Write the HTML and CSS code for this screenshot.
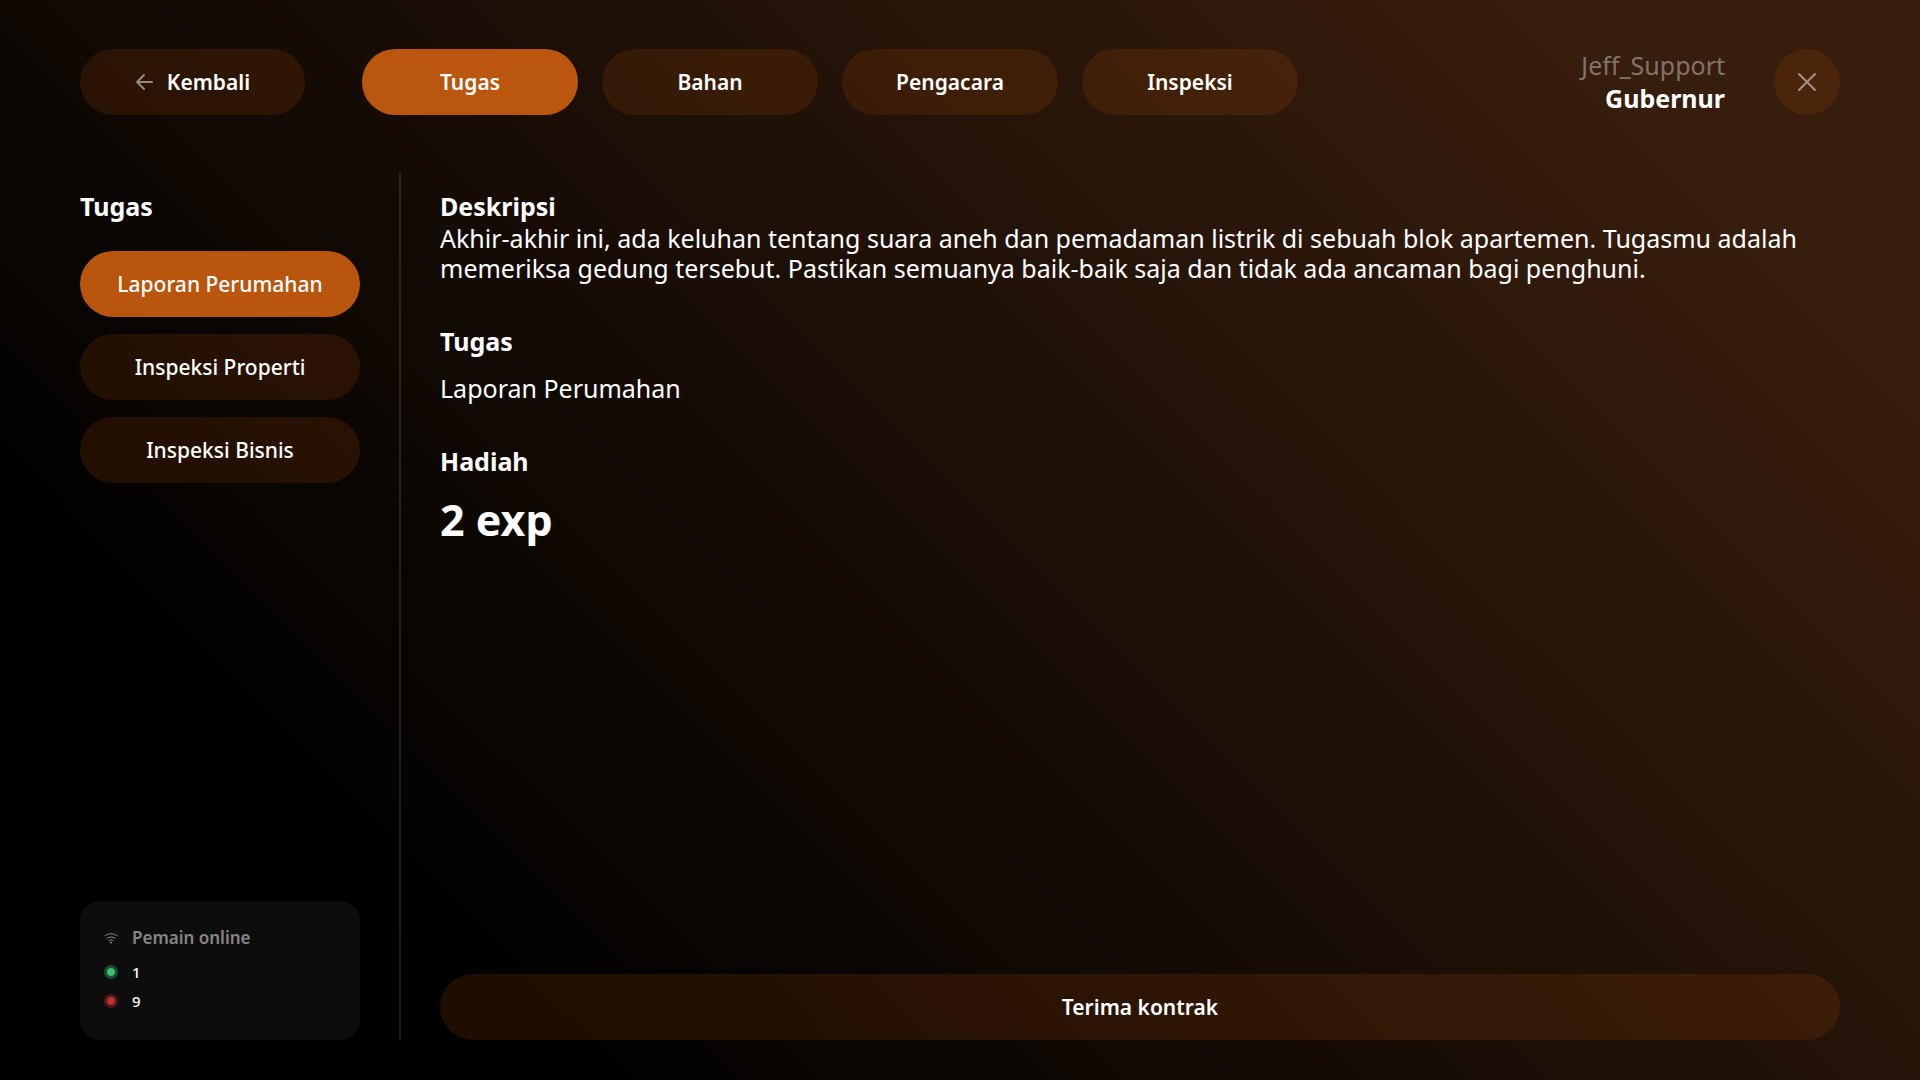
FILE: index.html
```html
<!DOCTYPE html>
<html lang="id">
<head>
  <meta charset="UTF-8">
  <meta name="viewport" content="width=device-width, initial-scale=1.0">
  <title>Tugas</title>
  <link rel="stylesheet" href="styles.css">
</head>
<body>

<div class="page">
  <header class="header">
    <button class="btn back">
      <svg class="back-icon" viewBox="0 0 18 18" aria-hidden="true">
        <path d="M17 9H2M9 2L2 9l7 7"/>
      </svg>
      Kembali
    </button>
    <nav class="tabs">
      <button class="btn tab active">Tugas</button>
      <button class="btn tab">Bahan</button>
      <button class="btn tab">Pengacara</button>
      <button class="btn tab">Inspeksi</button>
    </nav>
    <div class="user">
      <div class="user-name">Jeff_Support</div>
      <div class="user-role">Gubernur</div>
    </div>
    <button class="btn close" aria-label="Tutup">
      <svg class="close-icon" viewBox="0 0 20 20" aria-hidden="true">
        <path d="M2 2l16 16M18 2L2 18"/>
      </svg>
    </button>
  </header>

  <div class="main">
    <aside class="sidebar">
      <h2 class="title">Tugas</h2>
      <div class="menu">
        <button class="btn active">Laporan Perumahan</button>
        <button class="btn">Inspeksi Properti</button>
        <button class="btn">Inspeksi Bisnis</button>
      </div>
      <div class="online">
        <div class="online-row online-title">
          <svg class="wifi" viewBox="0 0 14 14" aria-hidden="true">
            <path d="M1 4.7c3.8-2.6 8.2-2.6 12 0M3 7.2c2.6-1.7 5.4-1.7 8 0M5 9.4c1.4-.8 2.6-.8 4 0"/>
            <circle cx="7" cy="11.4" r="1"/>
          </svg>
          Pemain online
        </div>
        <div class="online-row"><span class="dot green"></span>1</div>
        <div class="online-row"><span class="dot red"></span>9</div>
      </div>
    </aside>

    <main class="content">
      <section class="block">
        <h2 class="title">Deskripsi</h2>
        <p class="text">Akhir-akhir ini, ada keluhan tentang suara aneh dan pemadaman listrik di sebuah blok apartemen. Tugasmu adalah memeriksa gedung tersebut. Pastikan semuanya baik-baik saja dan tidak ada ancaman bagi penghuni.</p>
      </section>
      <section class="block spaced">
        <h2 class="title">Tugas</h2>
        <p class="text">Laporan Perumahan</p>
      </section>
      <section class="block spaced">
        <h2 class="title">Hadiah</h2>
        <p class="reward">2 exp</p>
      </section>
      <button class="btn accept">Terima kontrak</button>
    </main>
  </div>
</div>

</body>
</html>
```
FILE: styles.css
```css
* {
  box-sizing: border-box;
}

body {
  margin: 0;
  font-family: "Noto Sans", sans-serif;
  font-size: 25px;
  line-height: 30px;
  color: #fff;
  background: #000;
}

h2, p {
  margin: 0;
}

.page {
  min-height: 100vh;
  padding: 49px 80px 40px;
  display: flex;
  flex-direction: column;
  gap: 57px;
  background: linear-gradient(45deg, #000 18%, #361d0c 86%);
}

.header {
  display: flex;
  align-items: center;
}

.btn {
  display: flex;
  align-items: center;
  justify-content: center;
  height: 66px;
  padding: 0 20px;
  border: none;
  border-radius: 33px;
  background: rgba(204, 84, 10, 0.15);
  color: #fff;
  font-family: inherit;
  font-size: 21px;
  font-weight: 500;
  cursor: pointer;
}

.btn.active {
  background: rgba(204, 94, 14, 0.9);
}

.back {
  width: 225px;
  gap: 14px;
  margin-right: 57px;
  font-weight: 600;
}

.back-icon {
  width: 18px;
  height: 18px;
}

.back-icon path,
.close-icon path {
  fill: none;
  stroke: #fff;
  stroke-opacity: 0.5;
  stroke-width: 2;
  stroke-linecap: round;
  stroke-linejoin: round;
}

.tabs {
  display: flex;
  gap: 24px;
}

.tab {
  width: 216px;
  font-weight: 600;
}

.user {
  margin-left: auto;
  text-align: right;
  line-height: 33px;
}

.user-name {
  color: rgba(255, 255, 255, 0.4);
}

.user-role {
  font-weight: 700;
}

.close {
  width: 66px;
  padding: 0;
  margin-left: 49px;
}

.close-icon {
  width: 20px;
  height: 20px;
}

.main {
  flex: 1;
  display: flex;
}

.sidebar {
  display: flex;
  flex-direction: column;
  flex: 0 0 321px;
  padding: 19px 39px 0 0;
  border-right: 2px solid rgba(255, 255, 255, 0.1);
}

.title {
  margin-bottom: 2px;
  font-size: 25px;
  font-weight: 700;
  line-height: 30px;
}

.menu {
  display: flex;
  flex-direction: column;
  gap: 17px;
  margin-top: 28px;
}

.online {
  margin-top: auto;
  height: 139px;
  padding: 21px 24px;
  border-radius: 20px;
  background: rgba(255, 255, 255, 0.05);
}

.online-row {
  display: flex;
  align-items: center;
  gap: 14px;
  height: 29px;
  font-size: 15px;
  font-weight: 500;
}

.online-title {
  height: 31px;
  margin-bottom: 4px;
  font-size: 17px;
  font-weight: 600;
  color: rgba(255, 255, 255, 0.5);
}

.wifi {
  width: 14px;
  height: 14px;
  fill: none;
  stroke: currentColor;
  stroke-linecap: round;
}

.wifi circle {
  fill: currentColor;
  stroke: none;
}

/* ring is part of the dot */
.dot {
  width: 14px;
  height: 14px;
  border: 3px solid;
  border-radius: 50%;
  background-clip: padding-box;
}

.green {
  background-color: #38c172;
  border-color: rgba(56, 193, 114, 0.35);
}

.red {
  background-color: #c53030;
  border-color: rgba(197, 48, 48, 0.35);
}

.content {
  flex: 1;
  display: flex;
  flex-direction: column;
  padding: 19px 0 0 39px;
}

.block {
  margin-bottom: 43px;
}

.block.spaced .title {
  margin-bottom: 17px;
}

.text {
  font-weight: 400;
}

.reward {
  font-size: 43px;
  font-weight: 700;
  line-height: 54px;
}

.accept {
  width: 100%;
  margin-top: auto;
  font-weight: 600;
}
```
